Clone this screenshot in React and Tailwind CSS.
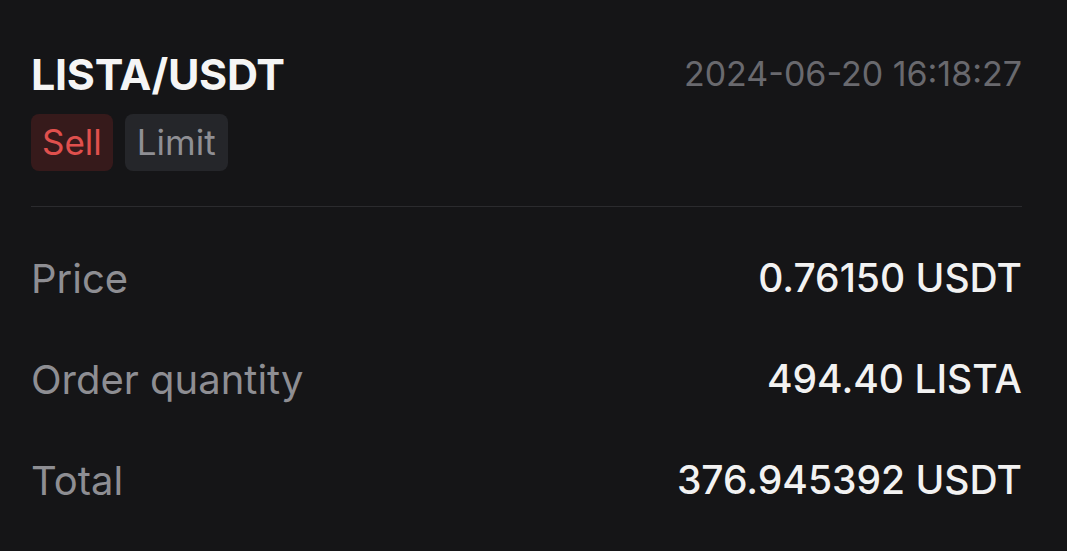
export default function App() {
    const rows = [
        { label: "Price", value: "0.76150 USDT" },
        { label: "Order quantity", value: "494.40 LISTA" },
        { label: "Total", value: "376.945392 USDT" },
    ];

    return (
        <div
            className="w-[1067px] h-[551px] bg-[#151517] overflow-hidden pl-[31px] pr-[45px] pt-[49px]"
            style={{ fontFamily: "Inter, 'Noto Sans', sans-serif" }}
        >
            {/* Header */}
            <div className="flex items-center justify-between h-[50px]">
                <h1 className="text-[43px] font-bold leading-[50px] text-[#f5f5f5] tracking-[-0.3px]">
                    LISTA/USDT
                </h1>
                <span className="text-[34px] leading-[50px] text-[#69696e]">2024-06-20 16:18:27</span>
            </div>

            {/* Tags */}
            <div className="flex gap-3 mt-[15px]">
                <span className="h-[57px] px-[11px] flex items-center rounded-lg bg-[#361a1b] text-[#e0504d] text-[35px]">
                    Sell
                </span>
                <span className="h-[57px] px-[12px] flex items-center rounded-lg bg-[#25262a] text-[#8f8f94] text-[35px]">
                    Limit
                </span>
            </div>

            <div className="mt-[35px] h-px bg-[#2b2b2e]" />

            {/* Details */}
            <div className="mt-[21px]">
                {rows.map((row) => (
                    <div key={row.label} className="h-[101px] flex items-center justify-between">
                        <span className="text-[40px] text-[#8e8e93]">{row.label}</span>
                        <span className="text-[39px] font-medium text-[#f2f2f2]">{row.value}</span>
                    </div>
                ))}
            </div>
        </div>
    );
}
